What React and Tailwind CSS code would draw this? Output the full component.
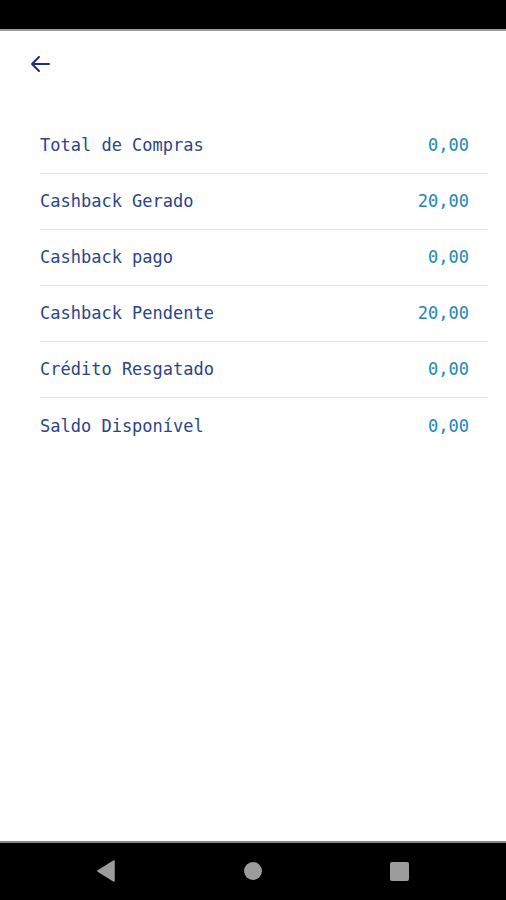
import React from "react";

const rows = [
  ["Total de Compras", "0,00"],
  ["Cashback Gerado", "20,00"],
  ["Cashback pago", "0,00"],
  ["Cashback Pendente", "20,00"],
  ["Crédito Resgatado", "0,00"],
  ["Saldo Disponível", "0,00"],
];

export default function App() {
  return (
    <div className="w-[506px] h-[900px] flex flex-col bg-white" style={{ fontFamily: '"DejaVu Sans Mono", "Liberation Mono", monospace' }}>
      <div className="h-[29px] bg-black shrink-0" />
      <div className="h-[2px] bg-[#9a9a9a] shrink-0" />
      <div className="flex-1 flex flex-col">
        <div className="h-[58px] flex items-center pl-[28px] pt-[8px]">
          <svg width="24" height="24" viewBox="0 0 24 24" fill="none" stroke="#1e2f7a" strokeWidth="2" strokeLinecap="round" strokeLinejoin="round">
            <path d="M21 12H5" />
            <path d="M11 5l-7 7 7 7" />
          </svg>
        </div>
        <div className="flex flex-col ml-[40px] mr-[18px] mt-[29px]">
          {rows.map(([label, value], i) => (
            <div
              key={label}
              className={`h-[56px] flex items-center justify-between pr-[19px] ${i < rows.length - 1 ? "border-b border-[#e2e2e2]" : ""}`}
            >
              <span className="text-[17px] text-[#2a4588] leading-none">{label}</span>
              <span className="text-[17px] text-[#1b86b6] leading-none">{value}</span>
            </div>
          ))}
        </div>
      </div>
      <div className="h-[2px] bg-[#8a8a8a] shrink-0" />
      <div className="h-[57px] bg-black shrink-0 flex items-center justify-center relative">
        <div className="flex items-center gap-[128px] -mt-[1px] -ml-[1px]">
          <svg width="20" height="22" viewBox="0 0 20 22">
            <path d="M18 1 L2 11 L18 21 Z" fill="#9c9c9c" stroke="#9c9c9c" strokeWidth="1.5" strokeLinejoin="round" />
          </svg>
          <div className="w-[18px] h-[18px] rounded-full bg-[#9c9c9c]" />
          <div className="w-[19px] h-[19px] rounded-[2px] bg-[#9c9c9c]" />
        </div>
      </div>
    </div>
  );
}
